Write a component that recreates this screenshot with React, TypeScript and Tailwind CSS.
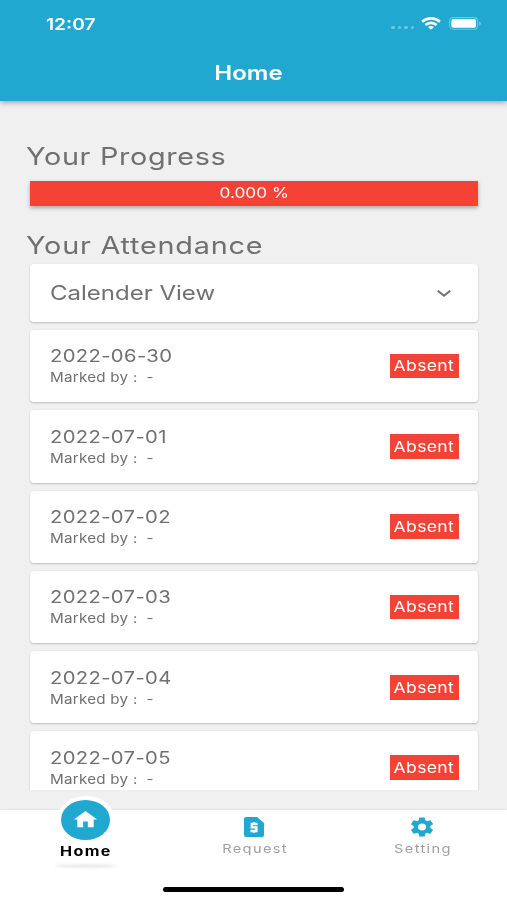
import { MdHome, MdSettings } from "react-icons/md";

const records = [
  { date: "2022-06-30", markedBy: "-", status: "Absent" },
  { date: "2022-07-01", markedBy: "-", status: "Absent" },
  { date: "2022-07-02", markedBy: "-", status: "Absent" },
  { date: "2022-07-03", markedBy: "-", status: "Absent" },
  { date: "2022-07-04", markedBy: "-", status: "Absent" },
  { date: "2022-07-05", markedBy: "-", status: "Absent" },
];

function StatusBar() {
  return (
    <div className="flex h-[46px] items-center justify-between pl-[46px] pr-[25px] pt-px">
      <span className="origin-left scale-x-[1.2] text-base font-semibold">12:07</span>
      <div className="flex items-center">
        <div className="mr-[7px] mt-2 flex gap-[3px] opacity-35">
          <span className="h-[3px] w-[3.5px] rounded-full bg-white" />
          <span className="h-[3px] w-[3.5px] rounded-full bg-white" />
          <span className="h-[3px] w-[3.5px] rounded-full bg-white" />
          <span className="h-[3px] w-[3.5px] rounded-full bg-white" />
        </div>
        <svg width="20" height="13" viewBox="0 0 20 13" fill="none" stroke="white" strokeWidth="2.6">
          <path d="M1.1 4.7C6 .3 14 .3 18.9 4.7" />
          <path d="M4.4 8C7.6 5.1 12.4 5.1 15.6 8" />
          <path d="M7 10.1C8.8 8.5 11.2 8.5 13 10.1L10 12.8Z" fill="white" stroke="none" />
        </svg>
        <svg className="ml-2" width="33" height="13" viewBox="0 0 33 13">
          <rect x=".6" y=".6" width="28" height="11.6" rx="3.4" fill="none" stroke="white" strokeOpacity=".35" strokeWidth="1.1" />
          <rect x="2.4" y="2.1" width="24.6" height="8.7" rx="1.8" fill="white" />
          <path d="M30.4 4.4C32.2 5 32.2 7.8 30.4 8.5Z" fill="white" fillOpacity=".5" />
        </svg>
      </div>
    </div>
  );
}

function AttendanceCard({ date, markedBy, status }: { date: string; markedBy: string; status: string }) {
  return (
    <div className="flex h-[72.3px] shrink-0 items-center justify-between rounded-[4px] bg-white pl-5 pr-[19px] shadow-[0_1px_2px_rgba(0,0,0,0.22)]">
      <div className="pt-[0.5px]">
        <div className="origin-left scale-x-[1.19] text-[17px] leading-[22px] tracking-[0.3px]">{date}</div>
        <div className="origin-left scale-x-[1.17] whitespace-pre text-[13px] leading-5 tracking-[0.2px]">
          Marked by :  {markedBy}
        </div>
      </div>
      <div className="flex h-[24.5px] w-[69px] items-center justify-center bg-[#f44336] pt-px text-white">
        <span className="scale-x-[1.17] text-[15px] tracking-[0.3px]">{status}</span>
      </div>
    </div>
  );
}

function RequestIcon() {
  return (
    <svg width="20" height="20" viewBox="0 0 20 20">
      <path d="M2 0H13L20 6V18Q20 20 18 20H2Q0 20 0 18V2Q0 0 2 0Z" fill="#20a8d0" />
      <path d="M13.6 7H7.8V10.4H12.4V14H6.4M10.1 5.3V7M10.1 14V15.7" fill="none" stroke="white" strokeWidth="2.4" />
    </svg>
  );
}

export default function App() {
  return (
    <div className="flex h-[900px] w-[507px] flex-col overflow-hidden bg-[#f0f0f0] font-['Inter',sans-serif] text-[#707070]">
      <header className="z-10 h-[101px] shrink-0 bg-[#20a8d0] text-white shadow-[0_2px_5px_rgba(0,0,0,0.3)]">
        <StatusBar />
        <div className="flex h-[54px] items-center justify-center pr-[11px]">
          <h1 className="scale-x-[1.2] text-xl font-semibold">Home</h1>
        </div>
      </header>

      <main className="flex h-[689px] shrink-0 flex-col overflow-hidden px-[30px] pt-10">
        <h2 className="-ml-1 origin-left scale-x-[1.2] text-2xl leading-[32px] tracking-[0.55px]">Your Progress</h2>
        <div className="mt-2 flex h-[25px] w-[447.5px] shrink-0 items-center justify-center bg-[#f44336] text-white shadow-[0_2px_4px_rgba(0,0,0,0.3)]">
          <span className="scale-x-[1.15] text-[15px]">0.000 %</span>
        </div>
        <h2 className="-ml-1 mt-6 origin-left scale-x-[1.2] text-2xl leading-[32px] tracking-[0.65px]">Your Attendance</h2>
        <div className="mt-[2px] flex w-[447.5px] flex-col gap-2">
          <div className="flex h-[58px] shrink-0 items-center justify-between rounded-[4px] bg-white pl-5 pr-[26px] shadow-[0_1px_2px_rgba(0,0,0,0.22)]">
            <span className="origin-left scale-x-[1.2] text-xl">Calender View</span>
            <svg width="16" height="9" viewBox="0 0 16 9" fill="none" stroke="currentColor" strokeWidth="2.1">
              <path d="M1.8 1.8L8 6.7L14.2 1.8" />
            </svg>
          </div>
          {records.map((r) => (
            <AttendanceCard key={r.date} {...r} />
          ))}
        </div>
      </main>

      <div className="h-5 shrink-0" />

      <nav className="relative h-[90px] shrink-0 bg-white shadow-[0_0_2px_rgba(0,0,0,0.12)]">
        <div className="flex text-[13px] leading-4 text-[#a0a0a0]">
          <div className="flex w-[171px] shrink-0 flex-col items-center">
            <div className="-mt-[14.5px] flex h-[48px] w-[58px] items-center justify-center rounded-[50%] bg-white">
              <div className="flex h-10 w-[49px] items-center justify-center rounded-[50%] bg-[#20a8d0]">
                <MdHome className="size-[23px] scale-x-[1.22] text-white" />
              </div>
            </div>
            <span className="-mt-[0.5px] pl-px scale-x-[1.24] font-bold tracking-[1.1px] text-black">Home</span>
            <div className="mt-[5px] h-1 w-[62px] rounded-[50%] bg-black/8 blur-[1px]" />
          </div>
          <div className="flex w-[166px] shrink-0 flex-col items-center pt-[7px]">
            <RequestIcon />
            <span className="mt-1 pl-px scale-x-[1.22] text-xs leading-4 tracking-[1.1px]">Request</span>
          </div>
          <div className="flex w-[170px] shrink-0 flex-col items-center pt-[4.5px]">
            <MdSettings className="size-6 scale-x-[1.17] text-[#20a8d0]" />
            <span className="mt-[2.5px] pl-0.5 scale-x-[1.22] text-xs leading-4 tracking-[1.1px]">Setting</span>
          </div>
        </div>
        <div className="absolute bottom-[8px] left-[163px] h-[5px] w-[181px] rounded-full bg-black" />
      </nav>
    </div>
  );
}
